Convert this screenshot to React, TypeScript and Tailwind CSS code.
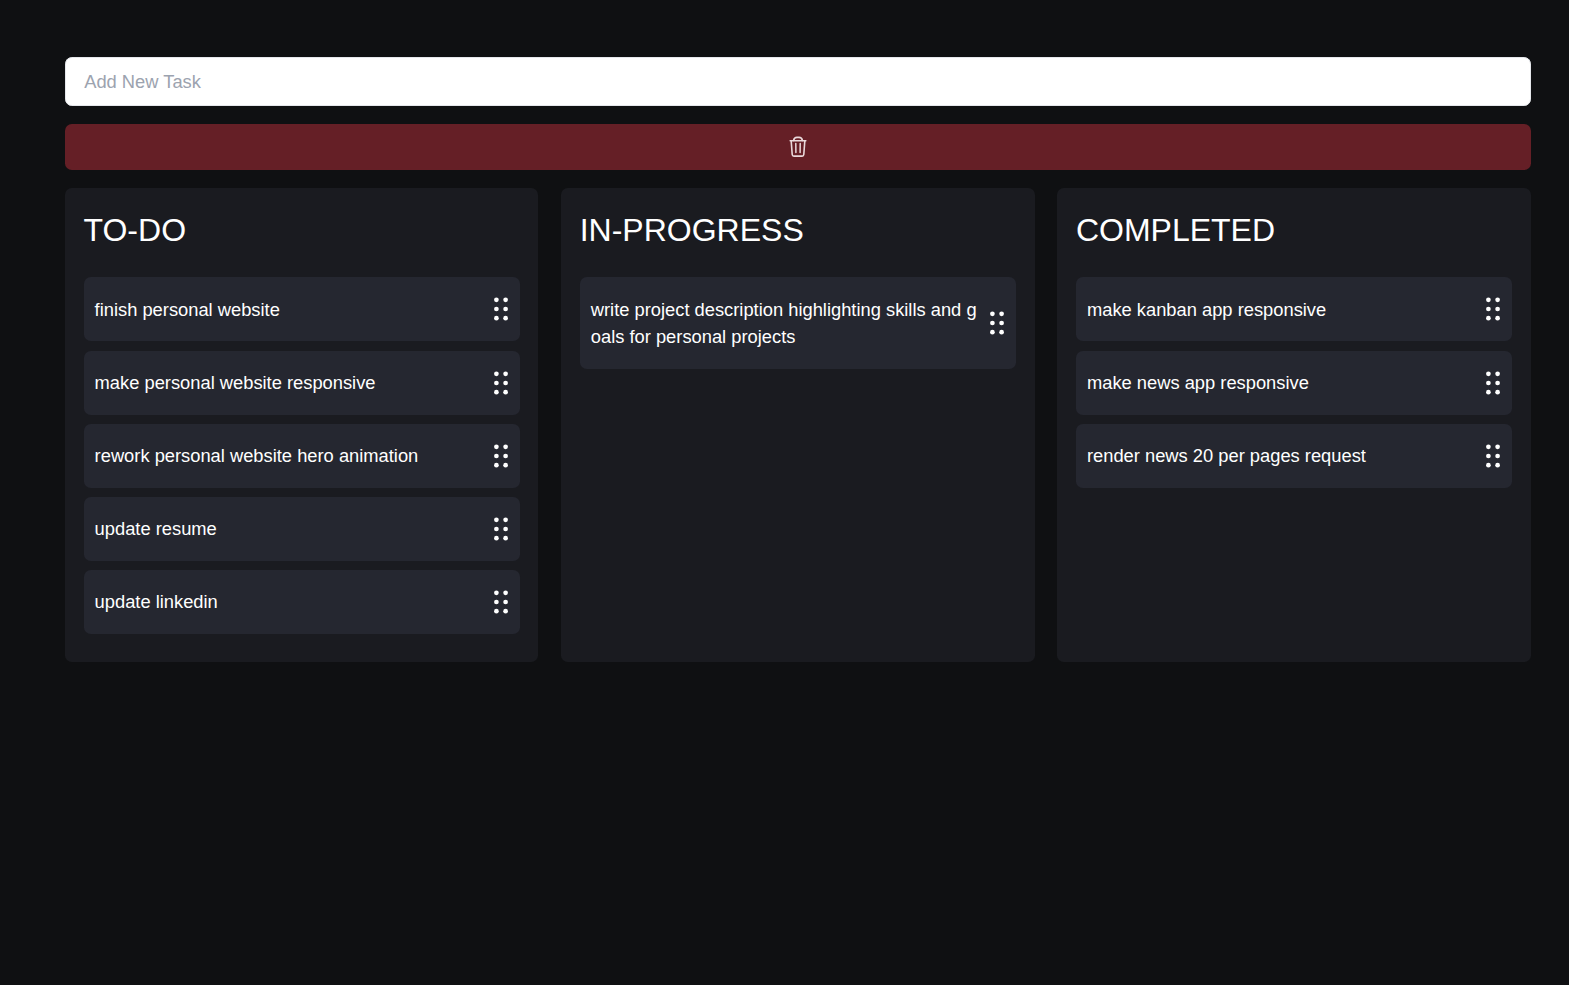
const columns = [
  {
    title: 'TO-DO',
    tasks: [
      'finish personal website',
      'make personal website responsive',
      'rework personal website hero animation',
      'update resume',
      'update linkedin',
    ],
  },
  {
    title: 'IN-PROGRESS',
    tasks: ['write project description highlighting skills and goals for personal projects'],
  },
  {
    title: 'COMPLETED',
    tasks: ['make kanban app responsive', 'make news app responsive', 'render news 20 per pages request'],
  },
];

function TrashIcon() {
  return (
    <svg
      className="h-[22px] w-[20px]"
      viewBox="0 0 20 22"
      fill="none"
      stroke="#ead9db"
      strokeWidth="1.6"
      strokeLinecap="round"
      strokeLinejoin="round"
    >
      <path d="M2.2 4.7h15.6" />
      <path d="M5.6 4.4C6 2.4 7.2 1.4 8.9 1.4h2.2c1.7 0 2.9 1 3.3 3" />
      <path d="M3.2 5l1 13.5c.1 1.1.7 1.6 1.7 1.6h8.2c1 0 1.6-.5 1.7-1.6l1-13.5" />
      <path d="M7.8 7.6l.1 9M12.2 7.6l-.1 9" strokeWidth="1.5" />
    </svg>
  );
}

function GripIcon() {
  return (
    <svg className="h-[26px] w-[16px] shrink-0" viewBox="0 0 16 26" fill="#ffffff">
      {[3.8, 13, 22.2].map((y) => (
        <g key={y}>
          <circle cx="3.4" cy={y} r="2.35" />
          <circle cx="12.6" cy={y} r="2.35" />
        </g>
      ))}
    </svg>
  );
}

export default function App() {
  return (
    <main className="flex min-h-screen flex-col bg-[#0f1012] pt-[57.2px] pr-[38.3px] pl-[65px] font-['Liberation_Sans',Arial,sans-serif] text-[18.32px] leading-[27.43px] text-white">
      <input
        className="h-[48.4px] w-full rounded-[6.86px] border border-[#e5e7eb] bg-white px-[18.2px] pt-[1.4px] text-[#111827] outline-none placeholder:text-[#9ca3af]"
        placeholder="Add New Task"
      />
      <button
        type="button"
        aria-label="Delete tasks"
        className="mt-[18.2px] flex h-[45.9px] w-full items-center justify-center rounded-[6.86px] bg-[#651f26]"
      >
        <TrashIcon />
      </button>
      <div className="mt-[18.1px] grid h-[473.8px] grid-cols-3 gap-[22.86px]">
        {columns.map((column) => (
          <section key={column.title} className="rounded-[6.86px] bg-[#1a1b20] px-[18.5px] pt-[22.1px]">
            <h2 className="text-[32px] leading-[41px]">{column.title}</h2>
            <ul className="mt-[26.5px] flex flex-col gap-[9.2px]">
              {column.tasks.map((task) => (
                <li
                  key={task}
                  className="flex min-h-16 items-center justify-between rounded-[6.86px] bg-[#252730] py-[18.29px] pr-[10.8px] pl-[11.1px]"
                >
                  <p className="mr-[10.4px] break-all">{task}</p>
                  <GripIcon />
                </li>
              ))}
            </ul>
          </section>
        ))}
      </div>
    </main>
  );
}
